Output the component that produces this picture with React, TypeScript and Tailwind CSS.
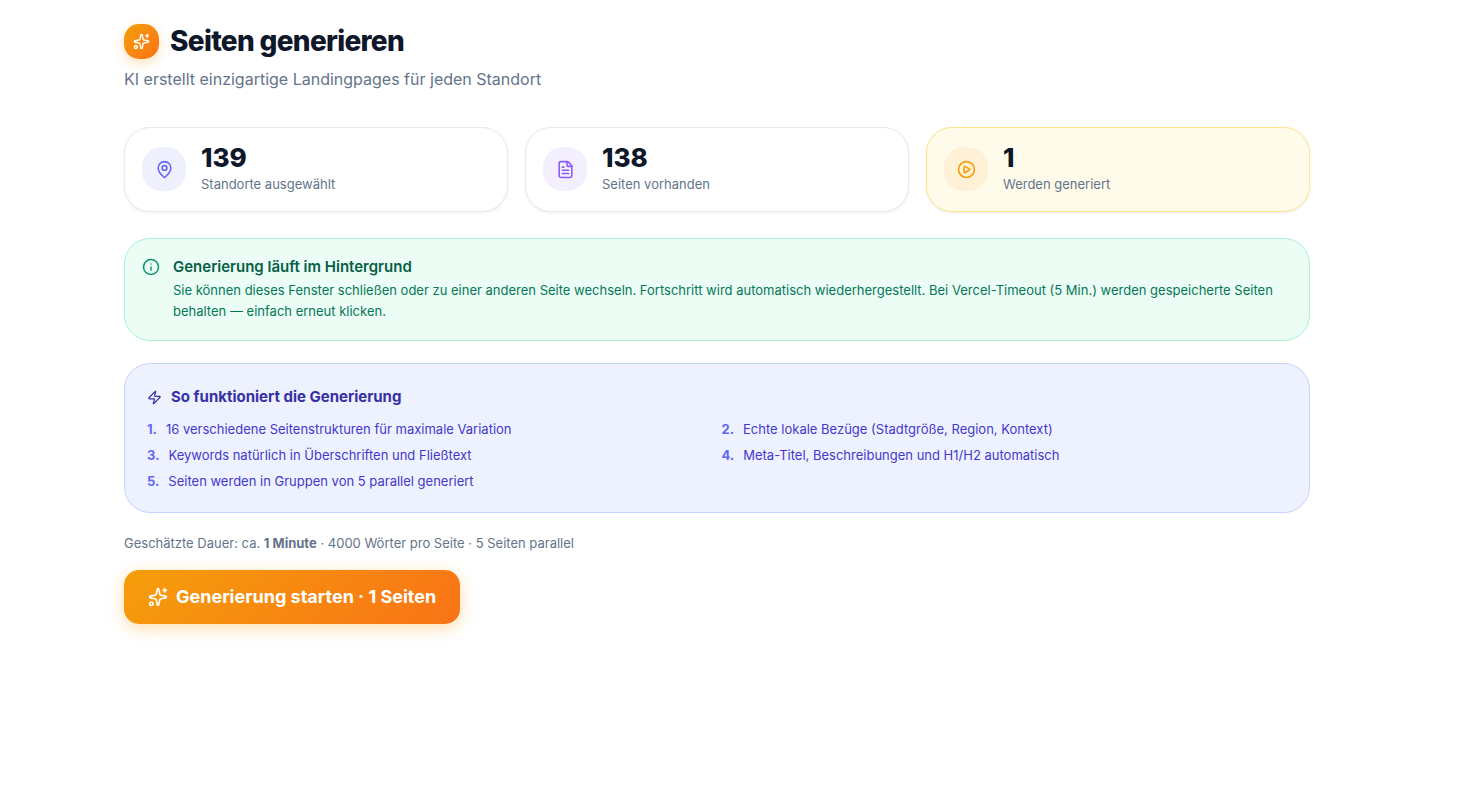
import React from 'react';
import { CirclePlay, FileText, Info, MapPin, Sparkles, Zap } from 'lucide-react';

const stats = [
  {
    value: 139,
    label: 'Standorte ausgewählt',
    icon: MapPin,
    card: 'border-[#e9e9ef] bg-white',
    badge: 'bg-[#eff0fe] text-[#6366f1]',
  },
  {
    value: 138,
    label: 'Seiten vorhanden',
    icon: FileText,
    card: 'border-[#e9e9ef] bg-white',
    badge: 'bg-[#f3effe] text-[#8b5cf6]',
  },
  {
    value: 1,
    label: 'Werden generiert',
    icon: CirclePlay,
    card: 'border-[#fde68a] bg-[#fffbeb]',
    badge: 'bg-[#fef1d6] text-[#f59e0b]',
  },
];

const steps = [
  '16 verschiedene Seitenstrukturen für maximale Variation',
  'Echte lokale Bezüge (Stadtgröße, Region, Kontext)',
  'Keywords natürlich in Überschriften und Fließtext',
  'Meta-Titel, Beschreibungen und H1/H2 automatisch',
  'Seiten werden in Gruppen von 5 parallel generiert',
];

const App: React.FC = () => {
  return (
    <div className="min-h-screen bg-white pt-6 pr-[27px] pb-12 font-['Inter',sans-serif]">
      <main className="mx-auto max-w-[1186px]">
        <header className="mb-9">
          <div className="flex items-center gap-[11px]">
            <div className="flex h-[35px] w-[35px] shrink-0 items-center justify-center rounded-[15px] bg-linear-[135deg] from-[#f59e0b] to-[#f97316] text-white shadow-[0_4px_12px_rgba(245,158,11,0.3)]">
              <Sparkles size={17} aria-hidden="true" />
            </div>
            <h1 className="text-[28px] leading-[35px] font-extrabold tracking-tight text-[#0f172a]">
              Seiten generieren
            </h1>
          </div>
          <p className="mt-[9px] text-[16px] leading-[23px] text-[#64748b]">
            KI erstellt einzigartige Landingpages für jeden Standort
          </p>
        </header>

        <section className="mb-[26px] grid grid-cols-1 gap-[17px] md:grid-cols-3">
          {stats.map(({ value, label, icon: Icon, card, badge }) => (
            <div
              key={label}
              className={`flex items-center gap-[15px] rounded-[26px] border px-[17px] pt-[17px] pb-[18px] shadow-[0_1px_3px_rgba(15,23,42,0.08)] ${card}`}
            >
              <div className={`flex h-11 w-11 shrink-0 items-center justify-center rounded-[20px] ${badge}`}>
                <Icon size={19} aria-hidden="true" />
              </div>
              <div>
                <div className="text-[26px] leading-[26px] font-extrabold text-[#0f172a]">{value}</div>
                <div className="mt-1 text-[13px] leading-[18px] text-[#64748b]">{label}</div>
              </div>
            </div>
          ))}
        </section>

        <section className="mb-[22px] flex items-start gap-[13px] rounded-[26px] border border-[#a7f3d0] bg-[#ecfdf5] px-[17px] pt-[17px] pb-[18px]">
          <Info size={18} className="mt-0.5 shrink-0 text-[#059669]" aria-hidden="true" />
          <div>
            <h2 className="text-[15px] leading-[22px] font-semibold text-[#065f46]">
              Generierung läuft im Hintergrund
            </h2>
            <p className="mt-0.5 text-[13px] leading-[21px] text-[#047857]">
              Sie können dieses Fenster schließen oder zu einer anderen Seite wechseln. Fortschritt wird
              automatisch wiederhergestellt. Bei Vercel-Timeout (5 Min.) werden gespeicherte Seiten behalten —
              einfach erneut klicken.
            </p>
          </div>
        </section>

        <section className="mb-5 rounded-[26px] border border-[#c7d2fe] bg-[#eef2ff] px-[22px] pt-[22px] pb-5">
          <h2 className="mb-[11px] flex items-center gap-[9px] text-[15px] leading-[22px] font-bold text-[#3730a3]">
            <Zap size={15} aria-hidden="true" />
            So funktioniert die Generierung
          </h2>
          <ol className="grid grid-cols-1 gap-x-[9px] gap-y-[5px] md:grid-cols-2">
            {steps.map((step, i) => (
              <li key={step} className="flex gap-[9px] text-[13px] leading-[21px] text-[#4338ca]">
                <span className="font-bold text-[#6366f1]">{i + 1}.</span>
                {step}
              </li>
            ))}
          </ol>
        </section>

        <p className="mb-4 text-[13px] leading-[21px] text-[#64748b]">
          Geschätzte Dauer: ca. <strong>1 Minute</strong> · 4000 Wörter pro Seite · 5 Seiten parallel
        </p>
        <button
          type="button"
          className="flex h-[54px] cursor-pointer items-center gap-2 rounded-[15px] bg-linear-[135deg] from-[#f59e0b] to-[#f97316] px-6 text-[18px] leading-[26px] font-bold text-white shadow-[0_4px_16px_rgba(245,158,11,0.35)]"
        >
          <Sparkles size={20} aria-hidden="true" />
          Generierung starten · 1 Seiten
        </button>
      </main>
    </div>
  );
};

export default App;
